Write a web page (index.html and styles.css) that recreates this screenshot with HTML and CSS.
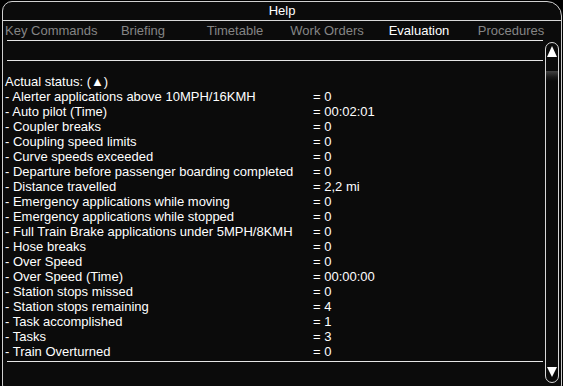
FILE: index.html
```
<!DOCTYPE html>
<html>
<head>
<meta charset="utf-8">
<link rel="stylesheet" href="styles.css">
</head>
<body>
<div class="window">
  <div class="title">Help</div>
  <div class="tabs">
    <div class="tab">Key Commands</div>
    <div class="tab">Briefing</div>
    <div class="tab">Timetable</div>
    <div class="tab">Work Orders</div>
    <div class="tab active">Evaluation</div>
    <div class="tab">Procedures</div>
  </div>
  <div class="body">
    <div class="main">
      <div class="rule"></div>
      <div class="spacer"></div>
      <div class="rule"></div>
      <div class="rows">
        <div class="row"><span class="label">Actual status: (▲)</span></div>
        <div class="row"><span class="label">- Alerter applications above 10MPH/16KMH</span><span class="val">= 0</span></div>
        <div class="row"><span class="label">- Auto pilot (Time)</span><span class="val">= 00:02:01</span></div>
        <div class="row"><span class="label">- Coupler breaks</span><span class="val">= 0</span></div>
        <div class="row"><span class="label">- Coupling speed limits</span><span class="val">= 0</span></div>
        <div class="row"><span class="label">- Curve speeds exceeded</span><span class="val">= 0</span></div>
        <div class="row"><span class="label">- Departure before passenger boarding completed</span><span class="val">= 0</span></div>
        <div class="row"><span class="label">- Distance travelled</span><span class="val">= 2,2 mi</span></div>
        <div class="row"><span class="label">- Emergency applications while moving</span><span class="val">= 0</span></div>
        <div class="row"><span class="label">- Emergency applications while stopped</span><span class="val">= 0</span></div>
        <div class="row"><span class="label">- Full Train Brake applications under 5MPH/8KMH</span><span class="val">= 0</span></div>
        <div class="row"><span class="label">- Hose breaks</span><span class="val">= 0</span></div>
        <div class="row"><span class="label">- Over Speed</span><span class="val">= 0</span></div>
        <div class="row"><span class="label">- Over Speed (Time)</span><span class="val">= 00:00:00</span></div>
        <div class="row"><span class="label">- Station stops missed</span><span class="val">= 0</span></div>
        <div class="row"><span class="label">- Station stops remaining</span><span class="val">= 4</span></div>
        <div class="row"><span class="label">- Task accomplished</span><span class="val">= 1</span></div>
        <div class="row"><span class="label">- Tasks</span><span class="val">= 3</span></div>
        <div class="row"><span class="label">- Train Overturned</span><span class="val">= 0</span></div>
      </div>
      <div class="rule bottom"></div>
    </div>
    <div class="scrollbar">
      <svg class="arrow up" width="10" height="11" viewBox="0 0 10 11"><polygon points="5,0 10,11 0,11" fill="#fff"/></svg>
      <div class="thumb-edge"></div>
      <div class="track"></div>
      <svg class="arrow down" width="10" height="10" viewBox="0 0 10 10"><polygon points="0,0 10,0 5,10" fill="#fff"/></svg>
    </div>
  </div>
</div>
</body>
</html>
```
FILE: styles.css
```
html, body {
  margin: 0;
  padding: 0;
  background: #000;
  overflow: hidden;
  height: 386px;
}
body {
  font-family: "Liberation Sans", Arial, "DejaVu Sans", sans-serif;
  font-size: 13px;
  color: #fff;
}
.window {
  margin: 1px 0 0 2px;
  width: 558px;
  height: 392px;
  border: 1px solid #d0d0d0;
  border-radius: 10px 15px 10px 10px;
  background: #0b0b0b;
}
.title {
  height: 18px;
  line-height: 18px;
  text-align: center;
  border-bottom: 1px solid #d8d8d8;
}
.tabs {
  display: flex;
  margin-left: 2px;
  height: 19px;
  line-height: 19px;
}
.tab {
  width: 92px;
  text-align: center;
  color: #858585;
  white-space: nowrap;
}
.tab.active {
  color: #fff;
}
.body {
  display: flex;
  margin-left: 2px;
}
.main {
  width: 538px;
}
.rule {
  height: 1px;
  background: #e6e6e6;
  margin-left: 2px;
}
.spacer {
  height: 19px;
}
.rows {
  padding-top: 13px;
}
.row {
  display: flex;
  height: 15px;
  line-height: 15px;
  white-space: nowrap;
}
.label {
  width: 308px;
}
.rule.bottom {
  margin-top: 2px;
}
.scrollbar {
  margin: 2px 0 0 2px;
  width: 12px;
  height: 339px;
  border: 1px solid #d8d8d8;
  border-radius: 7px;
  display: flex;
  flex-direction: column;
  align-items: center;
}
.arrow.up {
  margin-top: 3px;
}
.thumb-edge {
  margin-top: 14px;
  width: 12px;
  height: 10px;
  background: linear-gradient(#444, #1a1a1a 60%, #0b0b0b);
}
.track {
  flex: 1;
}
.arrow.down {
  margin-bottom: 5px;
}
```
